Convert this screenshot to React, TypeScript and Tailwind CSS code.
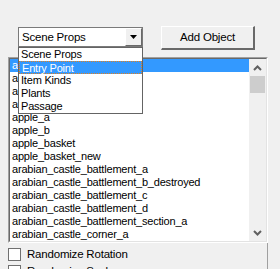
import React from "react";

const items = [
  "acorn_pile",
  "altar_stone",
  "amphora_a",
  "anvil",
  "apple_a",
  "apple_b",
  "apple_basket",
  "apple_basket_new",
  "arabian_castle_battlement_a",
  "arabian_castle_battlement_b_destroyed",
  "arabian_castle_battlement_c",
  "arabian_castle_battlement_d",
  "arabian_castle_battlement_section_a",
  "arabian_castle_corner_a",
];

const options = ["Scene Props", "Entry Point", "Item Kinds", "Plants", "Passage"];

export default function App() {
  return (
    <div
      className="relative w-[280px] h-[269px] overflow-hidden bg-[#f0f0f0] text-[11px] tracking-[-0.2px] text-black"
      style={{ fontFamily: '"Liberation Sans", Arial, sans-serif' }}
    >
      {/* top row */}
      <div className="flex items-start pl-[18px] pt-[26px]">
        <div className="mt-[1px] w-[125px] h-[20px] flex border border-[#7a7a7a] bg-white">
          <div className="flex-1 pl-[3px] leading-[18px] text-[11.5px]">Scene Props</div>
          <div className="w-[17px] h-[18px] bg-[#f0f0f0] border-l border-t border-white border-r border-b border-r-[#696969] border-b-[#696969] flex items-center justify-center">
            <svg width="7" height="4" viewBox="0 0 7 4">
              <path d="M0 0H7L3.5 4Z" fill="#000" />
            </svg>
          </div>
        </div>
        <div className="ml-[18px] w-[94px] h-[24px] bg-[#f0f0f0] border-t border-l border-white border-r-2 border-b-2 border-r-[#696969] border-b-[#696969] flex items-center justify-center leading-[13px] text-[11.5px]">
          Add Object
        </div>
      </div>

      {/* list */}
      <div className="ml-[8px] mt-[7px] w-[260px] h-[186px] border-t border-l border-[#a0a0a0] border-r border-b border-r-white border-b-white">
        <div className="w-full h-full border-t border-l border-[#696969] border-r border-b border-r-[#e3e3e3] border-b-[#e3e3e3] bg-white flex">
          <div className="w-[240px] overflow-hidden">
            {items.map((it, i) => (
              <div
                key={it}
                className={
                  "h-[13px] leading-[13px] pl-[2px] whitespace-nowrap " +
                  (i === 0 ? "bg-[#3399ff] text-white" : "")
                }
              >
                {it}
              </div>
            ))}
          </div>
          <div className="w-[17px] bg-[#f0f0f0] flex flex-col">
            <div className="h-[17px] flex items-center justify-center">
              <svg width="9" height="6" viewBox="0 0 9 6">
                <path d="M1 5L4.5 1.5L8 5" stroke="#606060" strokeWidth="2" fill="none" />
              </svg>
            </div>
            <div className="mx-[1px] h-[17px] bg-[#cdcdcd]" />
            <div className="flex-1" />
            <div className="h-[17px] flex items-center justify-center">
              <svg width="9" height="6" viewBox="0 0 9 6">
                <path d="M1 1L4.5 4.5L8 1" stroke="#606060" strokeWidth="2" fill="none" />
              </svg>
            </div>
          </div>
        </div>
      </div>

      {/* bottom area */}
      <div className="w-[268px] h-[40px] border-r border-[#a0a0a0] pt-[5px] pl-[8px]">
        <div className="flex items-center h-[13px] mb-[4px]">
          <div className="w-[13px] h-[13px] bg-white border border-[#707070]" />
          <span className="ml-[6px] leading-[13px] text-[11.5px]">Randomize Rotation</span>
        </div>
        <div className="flex items-center h-[13px]">
          <div className="w-[13px] h-[13px] bg-white border border-[#707070]" />
          <span className="ml-[6px] leading-[13px] text-[11.5px]">Randomize Scale</span>
        </div>
      </div>

      {/* dropdown */}
      <div className="absolute left-[18px] top-[47px] w-[125px] h-[67px] bg-white border border-[#646464]">
        {options.map((o, i) => (
          <div
            key={o}
            className={
              "h-[13px] leading-[12px] pl-[2px] whitespace-nowrap " +
              (i === 1 ? "bg-[#3399ff] text-white border border-dotted border-[#e08020] pl-[1px]" : "")
            }
          >
            {o}
          </div>
        ))}
      </div>
    </div>
  );
}
